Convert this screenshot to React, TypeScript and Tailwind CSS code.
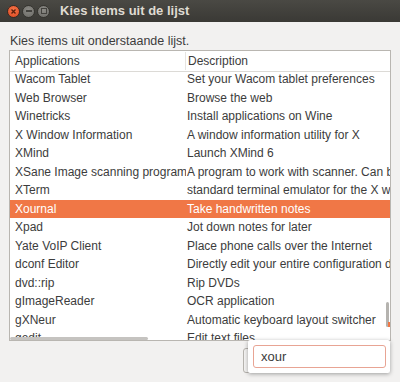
import React from "react";

const rows: [string, string][] = [
  ["Wacom Tablet", "Set your Wacom tablet preferences"],
  ["Web Browser", "Browse the web"],
  ["Winetricks", "Install applications on Wine"],
  ["X Window Information", "A window information utility for X"],
  ["XMind", "Launch XMind 6"],
  ["XSane Image scanning program", "A program to work with scanner. Can be used"],
  ["XTerm", "standard terminal emulator for the X window system"],
  ["Xournal", "Take handwritten notes"],
  ["Xpad", "Jot down notes for later"],
  ["Yate VoIP Client", "Place phone calls over the Internet"],
  ["dconf Editor", "Directly edit your entire configuration database"],
  ["dvd::rip", "Rip DVDs"],
  ["gImageReader", "OCR application"],
  ["gXNeur", "Automatic keyboard layout switcher"],
  ["gedit", "Edit text files"],
];

const grayBtn =
  "w-[13px] h-[13px] rounded-full bg-[radial-gradient(circle_at_50%_35%,#8c8b86,#6a6965)] border border-[#35342f] flex items-center justify-center";

export default function App() {
  return (
    <div
      className="relative w-[400px] h-[382px] overflow-hidden bg-[#f2f1f0] text-[#3c3c3c] flex flex-col"
      style={{ fontFamily: '"Liberation Sans", Arial, sans-serif' }}
    >
      {/* title bar */}
      <div className="h-[22px] shrink-0 bg-gradient-to-b from-[#4a4944] to-[#3a3935] flex items-center pl-[7px]">
        <div className="flex items-center gap-[2px]">
          <div className="w-[13px] h-[13px] rounded-full bg-[radial-gradient(circle_at_50%_35%,#f6764a,#d9461f)] border border-[#3a2a22] flex items-center justify-center">
            <svg width="7" height="7" viewBox="0 0 7 7">
              <path d="M1.5 1.5 L5.5 5.5 M5.5 1.5 L1.5 5.5" stroke="#5a1f0c" strokeWidth="1.4" />
            </svg>
          </div>
          <div className={grayBtn}>
            <div className="w-[6px] h-[2px] bg-[#43423e]" />
          </div>
          <div className={grayBtn}>
            <div className="w-[6px] h-[6px] border border-[#43423e]" />
          </div>
        </div>
        <div className="ml-[10px] text-[13px] font-bold text-[#dfdbd2]">Kies items uit de lijst</div>
      </div>

      {/* prompt */}
      <div className="pl-[10px] pt-[11px] text-[12.5px] leading-[17px]">Kies items uit onderstaande lijst.</div>

      {/* list */}
      <div className="relative ml-[9px] w-[382px] h-[291px] border border-[#b9b6b1] bg-white flex flex-col overflow-hidden text-[12px]">
        <div className="h-[21px] shrink-0 flex border-b border-[#dcdad6] bg-white relative z-10">
          <div className="w-[175px] pl-[5px] flex items-center">Applications</div>
          <div className="w-px my-[1px] bg-[#e6e4e0]" />
          <div className="flex-1 pl-[2px] flex items-center">Description</div>
        </div>
        <div className="flex-1 overflow-hidden">
          <div className="-mt-[2px]">
            {rows.map(([app, desc]) => {
              const sel = app === "Xournal";
              return (
                <div
                  key={app}
                  className={`h-[18.5px] flex items-center whitespace-nowrap ${
                    sel ? "bg-[#f07746] text-white" : ""
                  }`}
                >
                  <div className="w-[176px] pl-[5px] overflow-hidden">{app}</div>
                  <div className="flex-1 pl-[1px] overflow-hidden">{desc}</div>
                </div>
              );
            })}
          </div>
        </div>
        {/* scrollbar indicators */}
        <div className="absolute right-[1px] top-[251px] w-[3px] h-[25px] bg-[#b5b3af] rounded-sm" />
        <div className="absolute right-0 top-[271px] w-[2px] h-[5px] bg-[#f07746]" />
        <div className="absolute left-0 bottom-0 w-[138px] h-[3px] bg-[#c5c3c0] rounded-sm" />
      </div>

      {/* dialog buttons, mostly hidden behind the search popup */}
      <div className="flex justify-end gap-[7px] pr-[10px] mt-[7px]">
        <div className="w-[70px] h-[25px] rounded-[3px] border border-[#b6b3ae] bg-[#f4f3f2]" />
        <div className="w-[70px] h-[25px] rounded-[3px] border border-[#b6b3ae] bg-[#f4f3f2]" />
      </div>

      {/* search popup */}
      <div className="absolute left-[248px] top-[340px] w-[142px] h-[33px] bg-white shadow-[0_1px_4px_rgba(0,0,0,0.35)] rounded-[2px] flex items-center pl-[5px]">
        <div className="w-[133px] h-[23px] border border-[#e8a494] rounded-[3px] flex items-center pl-[7px] text-[13px] text-[#3c3c3c]">
          xour
        </div>
      </div>
    </div>
  );
}
